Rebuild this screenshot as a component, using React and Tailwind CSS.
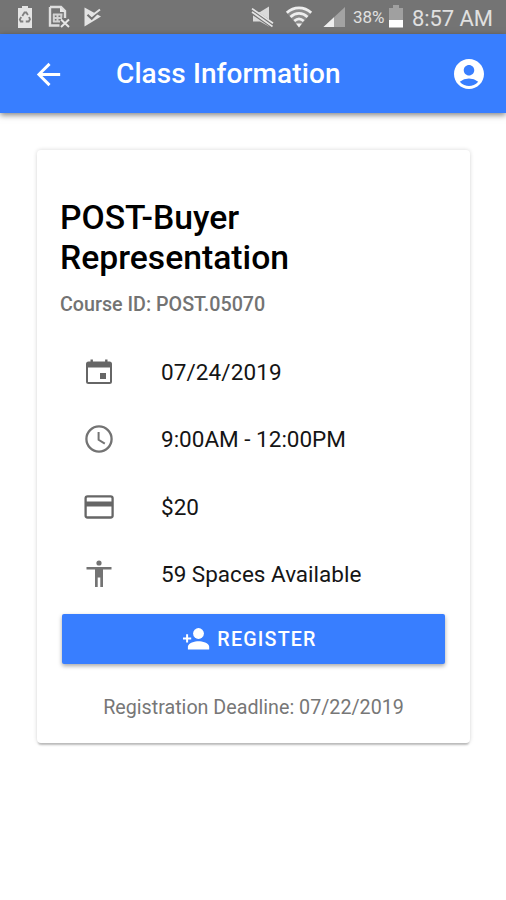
import { MdArrowBack, MdAccountCircle } from 'react-icons/md';

const CalendarIcon = () => (
    <svg className="h-[30px] w-[30px]" viewBox="0 0 30 30" fill="#666666">
        <path fillRule="evenodd" d="M6.500 2.500h2.400v2h12.200v-2h2.400v2h2A2.500 2.500 0 0 1 28 7v17.500a2.500 2.500 0 0 1-2.500 2.500h-21A2.500 2.500 0 0 1 2 24.500V7A2.500 2.500 0 0 1 4.500 4.500h2zM4 10.500V25h22V10.500z" />
        <rect x="16" y="16" width="6" height="6" />
    </svg>
);

const ClockIcon = () => (
    <svg className="h-[30px] w-[30px]" viewBox="0 0 30 30" fill="none" stroke="#737373">
        <circle cx="15" cy="15" r="12.600" strokeWidth="2.300" />
        <path d="M14.600 8v7.800l6.200 3.800" strokeWidth="2" />
    </svg>
);

const CardIcon = () => (
    <svg className="h-[30px] w-[30px]" viewBox="0 0 30 30">
        <rect x="1.600" y="4.300" width="27" height="21.200" rx="2" fill="none" stroke="#666666" strokeWidth="2.300" />
        <rect x="1.600" y="9.500" width="27" height="5" fill="#666666" />
    </svg>
);

const BodyIcon = () => (
    <svg className="h-[30px] w-[30px]" viewBox="0 0 30 30" fill="#737373">
        <circle cx="15" cy="4" r="2.600" />
        <path d="M2.500 8h25v2.600h-8.500v17.400h-2.700v-9.500h-2.600v9.500H11V10.600H2.500z" />
    </svg>
);

const PersonAddIcon = () => (
    <svg className="h-6 w-7" viewBox="0 0 28 24" fill="white">
        <circle cx="16.500" cy="6.500" r="5.400" />
        <path d="M5.900 22.500v-2.800c0-3.600 7.100-5.400 10.600-5.400s10.700 1.800 10.700 5.400v2.800z" />
        <path d="M4.100 7.300h2v3.100h3.100v2H6.100v3.100h-2v-3.100H1v-2h3.100z" />
    </svg>
);

// Notifications on the left side of the status bar
const RecycleBatteryIcon = () => (
    <svg className="h-6 w-4" viewBox="0 0 16 24">
        <path d="M5 1h6v2h4v20H1V3h4z" fill="#e4e4e4" />
        <path d="M5.300 11l2.200-3.500h1.800l1.600 2.500M12 12l1 2.300-1.300 2.200H8.800M6.300 16.500H3.800l-1-2 1.400-2.500" fill="none" stroke="#808080" strokeWidth="1.800" />
    </svg>
);

const FileErrorIcon = () => (
    <svg className="h-6 w-[23px]" viewBox="0 0 23 24" fill="none">
        <path d="M2 2h11l4 4v7M11.500 20.500H2V2" stroke="#dedede" strokeWidth="2.400" />
        <path d="M12 2v5h5" fill="#e8e8e8" />
        <path d="M5 9.500h9.500M5 13h9M5 16.500h7M5.800 9v8M9.500 9v8M13.300 9v4" stroke="#d2d2d2" strokeWidth="2" />
        <path d="M13 14.500l8 7.500M21 14.500L13 22" stroke="#e8e8e8" strokeWidth="2" />
    </svg>
);

const PlayCheckIcon = () => (
    <svg className="h-6 w-5" viewBox="0 0 20 24">
        <path d="M1.500 2.500L18 11.500 1.500 21.500z" fill="#e4e4e4" />
        <path d="M4.500 9.800l4.200 4 8.800-9" fill="none" stroke="#747474" strokeWidth="2.200" />
        <path d="M6.500 8.500l2.400 2.300L17 4.500" fill="none" stroke="#e4e4e4" strokeWidth="2" />
    </svg>
);

const MuteIcon = () => (
    <svg className="h-6 w-6" viewBox="0 0 24 24">
        <path d="M2 7H9L18 1.500v20L9 16.500H2z" fill="#dadada" />
        <path d="M0 5.600l22 15" stroke="#747474" strokeWidth="5.600" />
        <path d="M1 3.600L22 18.300M1 7L21.500 21.500" stroke="#e4e4e4" strokeWidth="1.700" />
    </svg>
);

const WifiIcon = () => (
    <svg className="h-6 w-7" viewBox="0 0 28 24" fill="none">
        <path d="M1.500 7.500C8.500.6 19.500.6 26.500 7.500L14 22.500z" fill="#8c8c8c" />
        <path d="M1.800 7.800c7-6.700 17.400-6.700 24.400 0M5.500 12c5-4.800 12-4.800 17 0M9.300 16c3-2.700 6.400-2.700 9.400 0" stroke="#eeeeee" strokeWidth="2.700" />
        <path d="M11 18.500h6l-3 4z" fill="#f0f0f0" />
    </svg>
);

const SignalIcon = () => (
    <svg className="h-6 w-6" viewBox="0 0 24 24">
        <path d="M23 2v20H1.500z" fill="#a3a3a3" />
        <path d="M12 12.300V22H1.500z" fill="#eeeeee" />
    </svg>
);

const BatteryIcon = () => (
    <svg className="h-6 w-4" viewBox="0 0 16 24">
        <path d="M5 0h6v3h4v12H1V3h4z" fill="#a0a0a0" />
        <rect x="1" y="15" width="14" height="7.500" fill="white" />
    </svg>
);

const details = [
    { icon: CalendarIcon, text: '07/24/2019', className: 'tracking-[0.1px]' },
    { icon: ClockIcon, text: '9:00AM - 12:00PM', className: 'tracking-[0px]' },
    { icon: CardIcon, text: '$20', className: 'tracking-[0px]' },
    { icon: BodyIcon, text: '59 Spaces Available', className: 'tracking-[0px]' },
];

function StatusBar() {
    return (
        <div className="flex h-[34px] items-center justify-between bg-[#747474] pl-[17px] pr-[13px] text-[#e0e0e0]">
            <div className="flex items-center">
                <RecycleBatteryIcon />
                <div className="ml-[15px]"><FileErrorIcon /></div>
                <div className="ml-3"><PlayCheckIcon /></div>
            </div>
            <div className="flex items-center">
                <MuteIcon />
                <div className="ml-2.5"><WifiIcon /></div>
                <div className="ml-[9px]"><SignalIcon /></div>
                <span className="ml-[7px] w-[32px] whitespace-nowrap pt-0.5 text-[17px]">38%</span>
                <div className="ml-[3px]"><BatteryIcon /></div>
                <span className="ml-2 w-[81px] whitespace-nowrap pt-[3px] text-[22px] tracking-[-0.1px]">8:57 AM</span>
            </div>
        </div>
    );
}

export default function App() {
    return (
        <div className="h-[900px] w-[506px] overflow-hidden bg-white font-['Roboto',sans-serif]">
            <StatusBar />

            {/* Toolbar */}
            <header className="flex h-[79px] items-center bg-[#387eff] pl-[31px] pr-[19px] text-white shadow-[0_2px_6px_rgba(0,0,0,0.5)]">
                <MdArrowBack className="mt-0.5 h-[35px] w-[35px]" />
                <h1 className="ml-[50px] flex-1 text-[28px] font-medium tracking-[0.1px]">Class Information</h1>
                <MdAccountCircle className="h-9 w-9" />
            </header>

            {/* Class card */}
            <main className="ml-[37px] mr-9 mt-[37px] h-[593px] rounded-[4px] bg-white shadow-[0_3px_2px_-1px_rgba(0,0,0,0.22),0_0_4px_rgba(0,0,0,0.16)]">
                <div className="px-[23px] pt-12">
                    <h2 className="text-[33.700px] font-medium leading-10 text-black">
                        POST-Buyer<br />Representation
                    </h2>
                    <p className="mt-[15px] text-[19.700px] font-medium leading-6 text-[#737373]">Course ID: POST.05070</p>
                </div>

                <ul className="mt-[21px]">
                    {details.map(({ icon: Icon, text, className }) => (
                        <li key={text} className="flex h-[67.500px] items-center pl-[47px]">
                            <Icon />
                            <span className={`ml-[47px] pt-0.5 text-[22.500px] text-[#151515] ${className}`}>{text}</span>
                        </li>
                    ))}
                </ul>

                <button className="mx-[25px] mt-[6px] flex h-[50px] w-[383px] items-center justify-center rounded-[2px] bg-[#387eff] pr-2 text-white shadow-[0_2px_4px_rgba(0,0,0,0.35)]">
                    <PersonAddIcon />
                    <span className="ml-[7px] pt-0.5 text-[19.700px] font-medium tracking-[1.180px]">REGISTER</span>
                </button>

                <p className="mt-8 text-center text-[19.700px] leading-6 text-[#777777]">Registration Deadline: 07/22/2019</p>
            </main>
        </div>
    );
}
